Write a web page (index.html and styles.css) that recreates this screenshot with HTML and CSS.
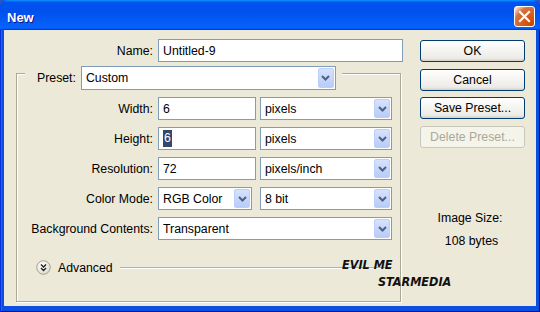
FILE: index.html
```html
<!DOCTYPE html>
<html>
<head>
<meta charset="utf-8">
<title>New</title>
<link rel="stylesheet" href="styles.css">
</head>
<body>
<div class="window">
  <div class="titlebar">
    <span class="title">New</span>
    <div class="close">
      <svg width="13" height="13" viewBox="0 0 13 13"><path d="M2 2 L11 11 M11 2 L2 11" stroke="#fff" stroke-width="2.2" stroke-linecap="square"/></svg>
    </div>
  </div>
  <div class="client">
    <div class="main">
      <div class="name-row">
        <span class="lbl lbl-name">Name:</span>
        <div class="input w-name">Untitled-9</div>
      </div>
      <div class="group">
        <div class="preset-row">
          <span class="lbl">Preset:</span>
          <div class="select w-preset"><span class="val">Custom</span><span class="arrow"><svg width="9" height="6" viewBox="0 0 9 6"><path d="M1 1 L4.5 4.5 L8 1" fill="none" stroke="#4d6185" stroke-width="2"/></svg></span></div>
        </div>
        <div class="fields">
          <div class="field">
            <span class="lbl lbl-field">Width:</span>
            <div class="input w-num">6</div>
            <div class="select w-unit"><span class="val">pixels</span><span class="arrow"><svg width="9" height="6" viewBox="0 0 9 6"><path d="M1 1 L4.5 4.5 L8 1" fill="none" stroke="#4d6185" stroke-width="2"/></svg></span></div>
          </div>
          <div class="field">
            <span class="lbl lbl-field">Height:</span>
            <div class="input w-num"><span class="sel">6</span></div>
            <div class="select w-unit"><span class="val">pixels</span><span class="arrow"><svg width="9" height="6" viewBox="0 0 9 6"><path d="M1 1 L4.5 4.5 L8 1" fill="none" stroke="#4d6185" stroke-width="2"/></svg></span></div>
          </div>
          <div class="field">
            <span class="lbl lbl-field">Resolution:</span>
            <div class="input w-num">72</div>
            <div class="select w-unit"><span class="val">pixels/inch</span><span class="arrow"><svg width="9" height="6" viewBox="0 0 9 6"><path d="M1 1 L4.5 4.5 L8 1" fill="none" stroke="#4d6185" stroke-width="2"/></svg></span></div>
          </div>
          <div class="field">
            <span class="lbl lbl-field">Color Mode:</span>
            <div class="select w-mode"><span class="val">RGB Color</span><span class="arrow"><svg width="9" height="6" viewBox="0 0 9 6"><path d="M1 1 L4.5 4.5 L8 1" fill="none" stroke="#4d6185" stroke-width="2"/></svg></span></div>
            <div class="select w-unit gap-more"><span class="val">8 bit</span><span class="arrow"><svg width="9" height="6" viewBox="0 0 9 6"><path d="M1 1 L4.5 4.5 L8 1" fill="none" stroke="#4d6185" stroke-width="2"/></svg></span></div>
          </div>
          <div class="field">
            <span class="lbl lbl-field">Background Contents:</span>
            <div class="select w-bg"><span class="val">Transparent</span><span class="arrow"><svg width="9" height="6" viewBox="0 0 9 6"><path d="M1 1 L4.5 4.5 L8 1" fill="none" stroke="#4d6185" stroke-width="2"/></svg></span></div>
          </div>
        </div>
        <div class="advanced">
          <svg class="adv-icon" width="15" height="15" viewBox="0 0 15 15">
            <defs><radialGradient id="g" cx="40%" cy="35%" r="70%"><stop offset="0" stop-color="#ffffff"/><stop offset="1" stop-color="#dcd8c8"/></radialGradient></defs>
            <circle cx="7.5" cy="7.5" r="6.8" fill="url(#g)" stroke="#a5a296" stroke-width="1"/>
            <path d="M5 4.6 L7.5 7 L10 4.6 M5 8.1 L7.5 10.5 L10 8.1" fill="none" stroke="#1e1e1e" stroke-width="1.4"/>
          </svg>
          <span class="adv-text">Advanced</span>
          <span class="adv-line"></span>
        </div>
      </div>
    </div>
    <div class="side">
      <div class="btn">OK</div>
      <div class="btn">Cancel</div>
      <div class="btn">Save Preset...</div>
      <div class="btn disabled">Delete Preset...</div>
      <div class="size-label">Image Size:</div>
      <div class="size-value">108 bytes</div>
    </div>
  </div>
  <div class="watermark wm1">EVIL ME</div>
  <div class="watermark wm2">STARMEDIA</div>
</div>
</body>
</html>
```
FILE: styles.css
```css
* { box-sizing: border-box; }
html, body { margin: 0; padding: 0; }
body {
  width: 540px;
  height: 312px;
  overflow: hidden;
  background: #2b55c4;
  font-family: "Liberation Sans", Arial, sans-serif;
  font-size: 12.3px;
  color: #000;
}
.window {
  position: relative;
  width: 540px;
  height: 312px;
  background: #0b4fe2;
  border-radius: 8px 8px 0 0;
  display: flex;
  flex-direction: column;
  box-shadow: inset 1px 0 #0831d9, inset -1px -1px #00138c, inset 2px 0 #166aee;
}
.titlebar {
  height: 30px;
  flex: none;
  display: flex;
  justify-content: space-between;
  padding: 0 5px 0 7px;
  background: linear-gradient(180deg, #0997ff, #0053ee 8%, #0050ee 40%, #0662f8 88%, #0662f8 93%, #005bff 95%, #003dd7 96%, #003dd7);
  border-radius: 8px 8px 0 0;
}
.title {
  color: #fff;
  font-weight: bold;
  font-size: 13px;
  line-height: 15px;
  padding-top: 10px;
  text-shadow: 1px 1px #0f1089;
}
.close {
  width: 21px;
  height: 21px;
  margin-top: 6px;
  border: 1px solid #fff;
  border-radius: 3px;
  background: radial-gradient(circle at 90% 90%, #cc4600 0, #dc6527 55%, #cd7546 70%, #ffccb2 90%, #fff 100%);
  display: flex;
  align-items: center;
  justify-content: center;
}
.client {
  flex: 1;
  margin: 0 4px 6px 4px;
  background: #ece9d8;
  display: flex;
  padding-left: 12px;
}
.main {
  width: 387px;
  padding-top: 9px;
}
.lbl {
  white-space: nowrap;
}
.name-row {
  display: flex;
  align-items: center;
  gap: 5px;
}
.lbl-name {
  width: 137px;
  text-align: right;
}
.input, .select {
  height: 23px;
  border: 1px solid #7f9db9;
  background: #fff;
  display: flex;
  align-items: center;
  white-space: nowrap;
}
.input {
  padding-left: 4px;
}
.select .val {
  flex: 1;
  padding-left: 4px;
}
.arrow {
  width: 16px;
  align-self: stretch;
  margin: 1px;
  border-radius: 2px;
  background: linear-gradient(180deg, #d6e2fd, #b8ccf8);
  border: 1px solid #bccff8;
  display: flex;
  align-items: center;
  justify-content: center;
}
.w-name { width: 245px; }
.w-preset { width: 255px; height: 24px; }
.w-num { width: 98px; }
.w-unit { width: 132px; }
.w-mode { width: 94px; }
.w-bg { width: 234px; }
.gap-more { margin-left: 4px; }
.sel {
  background: #34476c;
  color: #fff;
  padding: 1px 1px;
  line-height: 15px;
}
.group {
  margin-top: 11px;
  width: 385px;
  height: 229px;
  border: 1px solid #aca899;
  box-shadow: inset 1px 1px #fff, 1px 1px #fff;
}
.preset-row {
  display: flex;
  align-items: center;
  gap: 5px;
  width: fit-content;
  margin: -8px 0 0 8px;
  padding: 0 6px 0 12px;
  background: #ece9d8;
}
.fields {
  display: flex;
  flex-direction: column;
  gap: 7px;
  margin-top: 7px;
}
.field {
  display: flex;
  align-items: center;
  gap: 4px;
  height: 23px;
}
.lbl-field {
  width: 137px;
  padding-right: 1px;
  text-align: right;
}
.advanced {
  display: flex;
  align-items: center;
  height: 15px;
  margin: 20px 8px 0 19px;
}
.adv-icon { flex: none; }
.adv-text {
  margin-left: 7px;
}
.adv-line {
  flex: 1;
  height: 1px;
  margin-left: 7px;
  background: #b5b2a4;
  box-shadow: 0 1px #fff;
}
.side {
  width: 105px;
  margin-left: 17px;
  padding-top: 10px;
  display: flex;
  flex-direction: column;
}
.btn {
  height: 22px;
  margin-bottom: 6.5px;
  border: 1px solid #003c74;
  border-radius: 3px;
  background: linear-gradient(180deg, #fff, #ecebe6 86%, #d6d0c5);
  display: flex;
  align-items: center;
  justify-content: center;
  white-space: nowrap;
}
.btn.disabled {
  border-color: #c9c7ba;
  color: #aca899;
  background: #f5f4ea;
}
.size-label {
  margin-top: 57px;
  line-height: 15px;
  text-align: center;
  padding-right: 5px;
}
.size-value {
  margin-top: 8px;
  line-height: 15px;
  text-align: center;
  padding-right: 2px;
}
.watermark {
  position: absolute;
  font-family: "DejaVu Sans", sans-serif;
  font-weight: bold;
  font-style: italic;
  font-stretch: condensed;
  font-size: 12.5px;
  line-height: 15px;
  color: #111;
  letter-spacing: 0;
}
.wm1 { left: 342px; top: 257px; }
.wm2 { left: 378px; top: 274px; }
```
